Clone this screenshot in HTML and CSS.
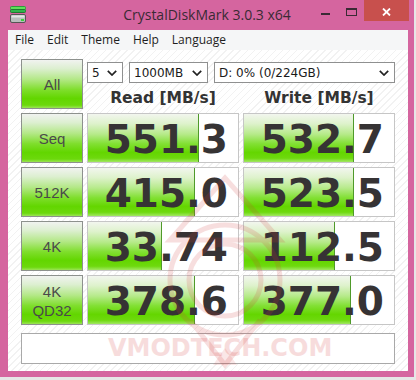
FILE: index.html
```html
<!DOCTYPE html>
<html>
<head>
<meta charset="utf-8">
<title>CrystalDiskMark 3.0.3 x64</title>
<link rel="stylesheet" href="styles.css">
</head>
<body>
<div class="window">
  <div class="titlebar">
    <svg class="app-icon" width="16" height="17" viewBox="0 0 16 17">
      <rect x="0.5" y="0.5" width="15" height="3" rx="1" fill="#5fe05a" stroke="#2f9a3a" stroke-width="1"/>
      <rect x="0.5" y="3.5" width="15" height="3" rx="1" fill="#2fb44a" stroke="#1f7a30" stroke-width="1"/>
      <rect x="0.5" y="8.5" width="15" height="8" rx="1.5" fill="#b9bdbd" stroke="#555" stroke-width="1"/>
      <rect x="1.5" y="9.5" width="13" height="2" fill="#e4e6e6"/>
      <rect x="11" y="13" width="3" height="2" fill="#3ad03a"/>
    </svg>
    <div class="title">CrystalDiskMark 3.0.3 x64</div>
    <div class="controls">
      <div class="cbtn"><span class="min-icon"></span></div>
      <div class="cbtn"><span class="max-icon"></span></div>
      <div class="cbtn close">
        <svg width="9" height="8" viewBox="0 0 9 8"><path d="M1 0.5 L8 7.5 M8 0.5 L1 7.5" stroke="#fff" stroke-width="1.8" fill="none"/></svg>
      </div>
    </div>
  </div>
  <div class="client">
    <div class="menubar">
      <span class="mitem">File</span>
      <span class="mitem">Edit</span>
      <span class="mitem">Theme</span>
      <span class="mitem">Help</span>
      <span class="mitem">Language</span>
    </div>
    <div class="content">
      <div class="grid">
        <div class="btn">All</div>
        <div class="toparea">
          <div class="combos">
            <div class="combo c-count"><span>5</span><svg class="chev" width="10" height="6" viewBox="0 0 10 6"><path d="M0.8 0.8 L5 5 L9.2 0.8" stroke="#222" stroke-width="1.7" fill="none"/></svg></div>
            <div class="combo c-size"><span>1000MB</span><svg class="chev" width="10" height="6" viewBox="0 0 10 6"><path d="M0.8 0.8 L5 5 L9.2 0.8" stroke="#222" stroke-width="1.7" fill="none"/></svg></div>
            <div class="combo c-drive"><span>D: 0% (0/224GB)</span><svg class="chev" width="10" height="6" viewBox="0 0 10 6"><path d="M0.8 0.8 L5 5 L9.2 0.8" stroke="#222" stroke-width="1.7" fill="none"/></svg></div>
          </div>
          <div class="heads">
            <div class="head">Read [MB/s]</div>
            <div class="head">Write [MB/s]</div>
          </div>
        </div>

        <div class="btn">Seq</div>
        <div class="cell"><div class="fill" style="width:111px"></div><span class="val">551.3</span></div>
        <div class="cell"><div class="fill" style="width:110px"></div><span class="val">532.7</span></div>

        <div class="btn">512K</div>
        <div class="cell"><div class="fill" style="width:107px"></div><span class="val">415.0</span></div>
        <div class="cell"><div class="fill" style="width:110px"></div><span class="val">523.5</span></div>

        <div class="btn">4K</div>
        <div class="cell"><div class="fill" style="width:74px"></div><span class="val">33.74</span></div>
        <div class="cell"><div class="fill" style="width:91px"></div><span class="val">112.5</span></div>

        <div class="btn two">4K<br>QD32</div>
        <div class="cell"><div class="fill" style="width:107px"></div><span class="val">378.6</span></div>
        <div class="cell"><div class="fill" style="width:107px"></div><span class="val">377.0</span></div>
      </div>
      <div class="comment"><span class="wm">VMODTECH.COM</span></div>
      <svg class="emblem" width="150" height="210" viewBox="0 0 150 210">
        <g fill="none" stroke="#d23a3a" stroke-width="5" opacity="0.16">
          <path d="M75 8 L20 70 L130 70 Z"/>
          <circle cx="75" cy="110" r="55"/>
          <circle cx="75" cy="110" r="36"/>
          <path d="M40 150 L75 195 L110 150"/>
        </g>
        <path d="M63 195 L75 178 L87 195 Z" fill="#d23a3a" opacity="0.12"/>
      </svg>
    </div>
  </div>
</div>
</body>
</html>
```

FILE: styles.css
```css
* { box-sizing: border-box; }

html, body {
  margin: 0;
  padding: 0;
}

body {
  width: 416px;
  height: 380px;
  background: #e6e6e6;
  overflow: hidden;
}

.window {
  width: 414px;
  height: 377px;
  background: #d5659f;
  display: flex;
  flex-direction: column;
}

.titlebar {
  height: 30px;
  display: grid;
  grid-template-columns: 1fr auto 1fr;
  align-items: start;
}

.app-icon {
  margin: 6px 0 0 10px;
  display: block;
}

.title {
  font-family: "Open Sans", "Noto Sans", sans-serif;
  font-size: 14px;
  line-height: 28px;
  padding-top: 1px;
  color: #3a2a34;
  white-space: nowrap;
}

.controls {
  justify-self: end;
  display: flex;
  margin-right: 5px;
}

.cbtn {
  width: 26px;
  height: 21px;
  display: flex;
  justify-content: center;
  align-items: flex-start;
}

.min-icon {
  width: 9px;
  height: 2px;
  margin-top: 13px;
  background: #3a2a34;
}

.max-icon {
  width: 11px;
  height: 8px;
  margin-top: 8px;
  border: 1px solid #3a2a34;
  border-top-width: 2px;
}

.close {
  width: 45px;
  background: #c8504d;
  align-items: center;
  padding-top: 2px;
}

.close svg { display: block; }

.client {
  flex: 1;
  margin: 0 6px 6px 8px;
  display: flex;
  flex-direction: column;
  background: #fff;
}

.menubar {
  height: 20px;
  background: #f5f6f7;
  display: flex;
  align-items: center;
  padding-left: 7px;
  gap: 13px;
  font-family: "Open Sans", "Noto Sans", sans-serif;
  font-size: 12px;
  color: #1e1e1e;
  line-height: 20px;
}

.content {
  flex: 1;
  position: relative;
  padding: 9px 13px 0;
  background: repeating-linear-gradient(135deg, #ffffff 0 4px, #f2f2f2 4px 5px);
}

.emblem {
  position: absolute;
  left: 142px;
  top: 120px;
  pointer-events: none;
}

.grid {
  display: grid;
  grid-template-columns: 62px 152px 152px;
  grid-auto-rows: 50px;
  gap: 4px;
}

.btn {
  border: 1px solid #8d918d;
  background: linear-gradient(to bottom, #f1f3f0 0%, #dcefd0 18%, #b4e888 40%, #7fde2c 62%, #62d600 80%, #6cd90c 94%, #9be456 100%);
  display: flex;
  align-items: center;
  justify-content: center;
  text-align: center;
  font-family: "Liberation Sans", Arial, sans-serif;
  font-size: 15px;
  color: #4a4a4a;
}

.btn.two {
  line-height: 19px;
  padding-top: 1px;
}

.toparea {
  grid-column: 2 / 4;
  display: flex;
  flex-direction: column;
}

.combos {
  display: flex;
  gap: 6px;
  margin-top: 3px;
  height: 21px;
}

.combo {
  height: 21px;
  border: 1px solid #8f9090;
  background: #fff;
  display: flex;
  align-items: center;
  justify-content: space-between;
  padding: 0 5px 0 4px;
  font-family: "DejaVu Sans", Verdana, sans-serif;
  font-size: 12px;
  color: #1a1a1a;
}

.c-count { width: 36px; }
.c-size { width: 79px; }
.c-drive { flex: 1; }

.chev { display: block; }

.heads {
  display: grid;
  grid-template-columns: 152px 152px;
  column-gap: 4px;
  margin-top: 6px;
}

.head {
  text-align: center;
  font-family: "DejaVu Sans", Verdana, sans-serif;
  font-weight: bold;
  font-size: 15.5px;
  line-height: 18px;
  color: #333;
}

.cell {
  border: 1px solid #c6c6c6;
  background: #fff;
  display: grid;
}

.fill {
  grid-area: 1 / 1;
  justify-self: start;
  height: 100%;
  border-right: 1px solid #4f9a2a;
  background: linear-gradient(to bottom, #f2f6ee 0%, #def2cc 20%, #b6ea8a 42%, #82e034 62%, #64d600 80%, #6ed90e 92%, #a2e862 100%);
}

.val {
  grid-area: 1 / 1;
  justify-self: end;
  align-self: stretch;
  padding: 4px 10px 0 0;
  line-height: 44px;
  font-family: "DejaVu Sans", Verdana, sans-serif;
  font-weight: bold;
  font-size: 39px;
  color: #363334;
}

.comment {
  margin-top: 8px;
  height: 31px;
  border: 1px solid #a9a9a9;
  background: #fff;
  display: flex;
  align-items: center;
  padding-left: 86px;
}

.wm {
  font-family: "DejaVu Sans", Verdana, sans-serif;
  font-weight: bold;
  font-size: 24px;
  color: #f7dcdc;
  line-height: 29px;
}
```
